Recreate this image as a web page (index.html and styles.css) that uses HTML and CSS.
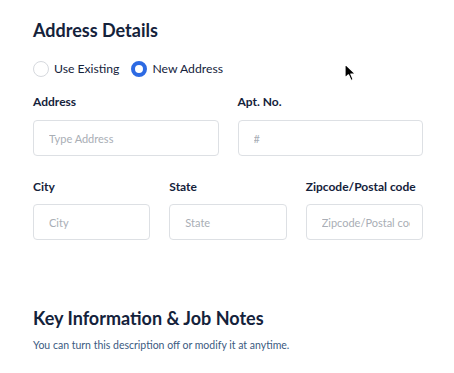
FILE: index.html
```html
<!DOCTYPE html>
<html lang="en">
<head>
    <meta charset="UTF-8">
    <meta name="viewport" content="width=device-width, initial-scale=1.0">
    <title>Address Details</title>
    <link rel="stylesheet" href="styles.css">
</head>
<body>
    <div class="content">
        <h1>Address Details</h1>

        <div class="radios">
            <label class="radio">
                <span class="dot"></span>
                <span>Use Existing</span>
            </label>
            <label class="radio">
                <span class="dot checked"></span>
                <span>New Address</span>
            </label>
        </div>

        <div class="row two">
            <div class="field">
                <div class="label">Address</div>
                <input class="input" type="text" placeholder="Type Address">
            </div>
            <div class="field">
                <div class="label">Apt. No.</div>
                <input class="input" type="text" placeholder="#">
            </div>
        </div>

        <div class="row three">
            <div class="field">
                <div class="label">City</div>
                <input class="input" type="text" placeholder="City">
            </div>
            <div class="field">
                <div class="label">State</div>
                <input class="input" type="text" placeholder="State">
            </div>
            <div class="field">
                <div class="label">Zipcode/Postal code</div>
                <input class="input" type="text" placeholder="Zipcode/Postal code">
            </div>
        </div>

        <h1 class="second">Key Information &amp; Job Notes</h1>
        <p class="desc">You can turn this description off or modify it at anytime.</p>
    </div>

    <svg class="cursor" width="14" height="20" viewBox="0 0 14 20">
        <path d="M1 1 L1 15 L4.5 11.8 L7 17.5 L9.2 16.5 L6.8 11 L11.5 11 Z" fill="#000" stroke="#fff" stroke-width="1.2" stroke-linejoin="round"/>
    </svg>
</body>
</html>
```

FILE: styles.css
```css
body {
    font-family: Lato, "Open Sans", sans-serif;
    background-color: #fff;
    margin: 0;
    color: #14223b;
}
.content {
    width: 390px;
    padding: 19px 0 0 33px;
}
h1 {
    font-size: 18px;
    font-weight: 700;
    margin: 0;
    line-height: 22px;
}
.radios {
    display: flex;
    gap: 12px;
    margin-top: 20px;
    font-size: 12.2px;
    line-height: 16px;
}
.radio {
    display: flex;
    align-items: center;
    gap: 5px;
}
.dot {
    width: 14px;
    height: 14px;
    border: 1px solid #d6d9de;
    border-radius: 50%;
}
.dot.checked {
    width: 8px;
    height: 8px;
    border: 4px solid #2d6ae3;
}
.row {
    display: grid;
    gap: 19px;
}
.row.two {
    grid-template-columns: minmax(0, 1fr) minmax(0, 1fr);
    margin-top: 17px;
}
.row.three {
    grid-template-columns: minmax(0, 1fr) minmax(0, 1fr) minmax(0, 1fr);
    margin-top: 23px;
}
.label {
    font-size: 12px;
    font-weight: 700;
    line-height: 16px;
    margin-bottom: 10px;
}
.row.three .label {
    margin-bottom: 9px;
}
.input {
    display: block;
    box-sizing: border-box;
    width: 100%;
    height: 36px;
    margin: 0;
    border: 1px solid #dde0e4;
    border-radius: 4px;
    font-family: Lato, "Open Sans", sans-serif;
    font-size: 11px;
    padding: 0 12px 0 15px;
    outline: none;
}
.input::placeholder {
    color: #a9aeb5;
}
h1.second {
    margin-top: 67px;
}
.desc {
    font-size: 10.5px;
    color: #3b5a7f;
    margin: 10px 0 0;
}
.cursor {
    position: absolute;
    left: 344px;
    top: 63px;
}
```
